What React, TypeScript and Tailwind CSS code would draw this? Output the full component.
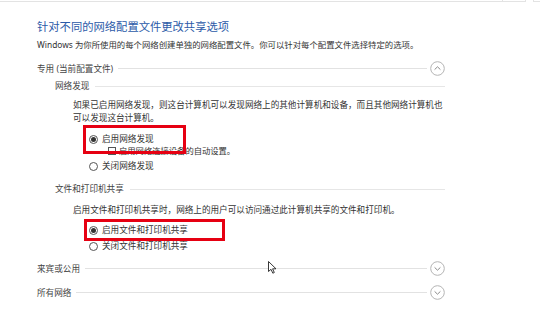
import React from "react";

const font = { fontFamily: '"Noto Sans", "Noto Sans CJK SC", sans-serif' };

function ChevronCircle({ up }: { up?: boolean }) {
  return (
    <svg width="15" height="15" viewBox="0 0 15 15" className="shrink-0">
      <circle cx="7.5" cy="7.5" r="6.8" fill="white" stroke="#b4b4b4" strokeWidth="1" />
      {up ? (
        <path d="M4.6 8.6 L7.5 5.8 L10.4 8.6" fill="none" stroke="#8a8a8a" strokeWidth="1" />
      ) : (
        <path d="M4.6 6.4 L7.5 9.2 L10.4 6.4" fill="none" stroke="#8a8a8a" strokeWidth="1" />
      )}
    </svg>
  );
}

function SectionHeader({ label, up, className }: { label: string; up?: boolean; className?: string }) {
  return (
    <div className={`flex h-[15px] items-center ${className ?? ""}`}>
      <span className="text-[8.6px] leading-[12px] text-[#444]">{label}</span>
      <div className="ml-[5px] mr-[3px] h-px flex-1 bg-[#e2e2e2]" />
      <ChevronCircle up={up} />
    </div>
  );
}

function SubHeader({ label, className }: { label: string; className?: string }) {
  return (
    <div className={`flex h-[12px] items-center pl-[18px] ${className ?? ""}`}>
      <span className="text-[8.6px] leading-[12px] text-[#444]">{label}</span>
      <div className="ml-[6px] h-px flex-1 bg-[#e6e6e6]" />
    </div>
  );
}

function Radio({ label, checked, className }: { label: string; checked?: boolean; className?: string }) {
  return (
    <div className={`flex h-[12px] items-center pl-[52px] ${className ?? ""}`}>
      <span className="flex size-[9px] items-center justify-center rounded-full border border-[#555] bg-white">
        {checked && <span className="size-[5px] rounded-full bg-[#333]" />}
      </span>
      <span className="ml-[4px] text-[8.6px] leading-[12px] text-[#333]">{label}</span>
    </div>
  );
}

export default function App() {
  return (
    <div className="relative h-[315px] w-[540px] overflow-hidden bg-white" style={font}>
      {/* top edge of the search box */}
      <div className="flex h-[2px]">
        <div className="h-[2px] w-[503px] border-b border-r border-[#e3e3e3]" />
        <div className="h-[2px] w-[23px] border-b border-r border-[#e3e3e3]" />
        <div className="ml-[7px] h-[2px] flex-1 border-b border-l border-[#e3e3e3]" />
      </div>

      <div className="w-[445px] pl-[37px]">
        <div className="mt-[17px] text-[11.3px] leading-[16px] text-[#2b5aa8]">针对不同的网络配置文件更改共享选项</div>
        <div className="mt-[4px] whitespace-nowrap text-[8.4px] leading-[12px] text-[#333]">
          Windows 为你所使用的每个网络创建单独的网络配置文件。你可以针对每个配置文件选择特定的选项。
        </div>

        <SectionHeader label="专用 (当前配置文件)" up className="mt-[10px]" />

        <SubHeader label="网络发现" className="mt-[4px]" />
        <div className="mt-[7px] pl-[36px] text-[8.6px] leading-[13px] text-[#333] whitespace-nowrap">
          如果已启用网络发现，则这台计算机可以发现网络上的其他计算机和设备，而且其他网络计算机也
          <br />
          可以发现这台计算机。
        </div>
        <Radio label="启用网络发现" checked className="mt-[8px]" />
        <div className="mt-0 flex h-[12px] items-center pl-[71px]">
          <span className="size-[8px] border border-[#555] bg-white" />
          <span className="ml-[3px] text-[8.3px] leading-[12px] text-[#333]">启用网络连接设备的自动设置。</span>
        </div>
        <Radio label="关闭网络发现" className="mt-[3px]" />

        <SubHeader label="文件和打印机共享" className="mt-[11px]" />
        <div className="mt-[9px] pl-[36px] text-[8.6px] leading-[13px] text-[#333] whitespace-nowrap">
          启用文件和打印机共享时，网络上的用户可以访问通过此计算机共享的文件和打印机。
        </div>
        <Radio label="启用文件和打印机共享" checked className="mt-[7px]" />
        <Radio label="关闭文件和打印机共享" className="mt-[4px]" />

        <SectionHeader label="来宾或公用" className="mt-[9px]" />
        <SectionHeader label="所有网络" className="mt-[9px]" />
      </div>

      {/* red highlight boxes */}
      <div className="absolute left-[83px] top-[125px] h-[29px] w-[103px] border-[3px] border-[#e60012]" />
      <div className="absolute left-[84px] top-[219px] h-[22px] w-[141px] border-[3px] border-[#e60012]" />

      {/* mouse pointer */}
      <svg className="absolute left-[268px] top-[261px]" width="9" height="13" viewBox="0 0 9 13">
        <path d="M0.5 0.5 L0.5 10.5 L3 8.3 L4.8 12.2 L6.3 11.5 L4.6 7.8 L8 7.8 Z" fill="white" stroke="#222" strokeWidth="0.9" strokeLinejoin="round" />
      </svg>
    </div>
  );
}
